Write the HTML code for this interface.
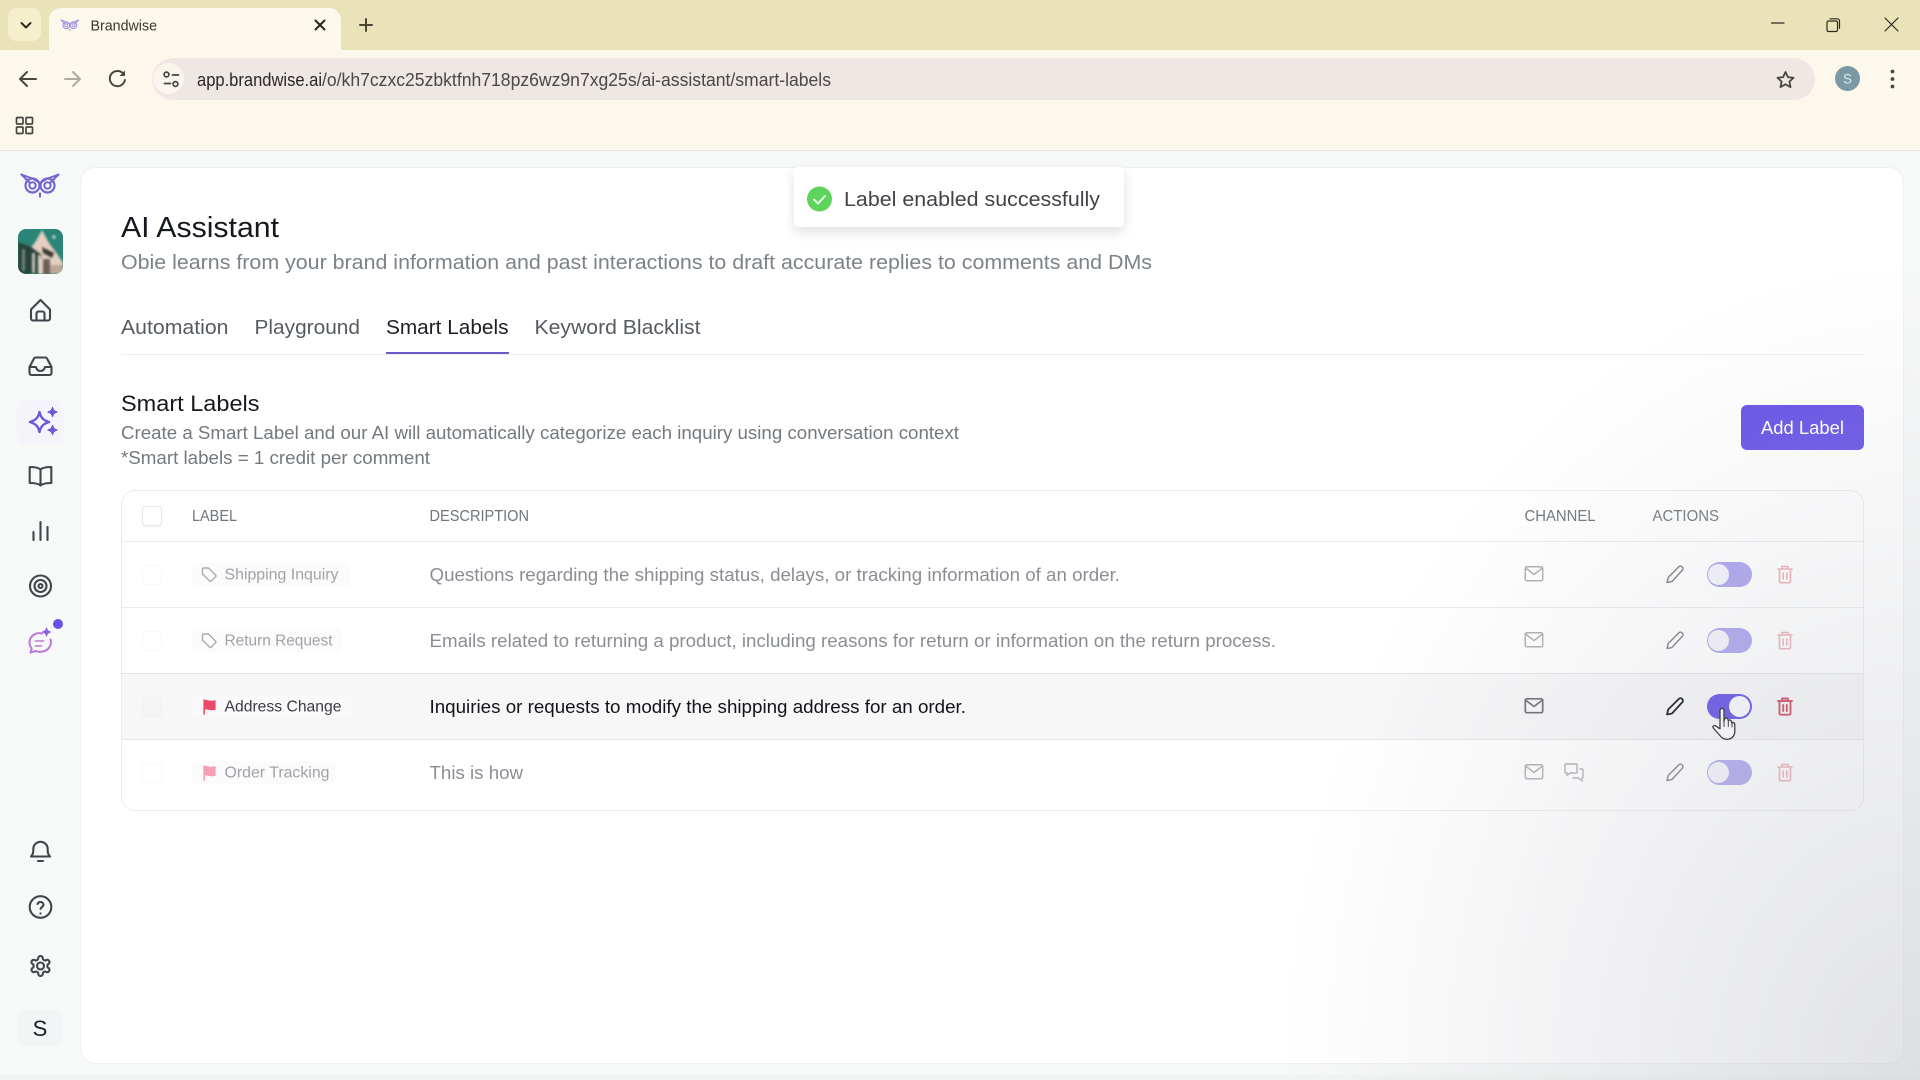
<!DOCTYPE html>
<html><head><meta charset="utf-8"><title>Brandwise</title>
<style>
html,body{margin:0;padding:0;width:1920px;height:1080px;overflow:hidden;background:#f7f8f8}
body{position:relative;font-family:"Liberation Sans",sans-serif}
.a{position:absolute;box-sizing:border-box}
svg{position:absolute;left:0;top:0}
text{font-family:"Liberation Sans",sans-serif}
</style></head><body>
<div class="a" style="left:0;top:0;width:1920px;height:50px;background:#eae3ba"></div>
<div class="a" style="left:0;top:50px;width:1920px;height:101px;background:#fdf8ec;border-bottom:1px solid #e8e5dc"></div>
<div class="a" style="left:8px;top:8px;width:33px;height:33px;border-radius:9px;background:#f5efcc"></div>
<div class="a" style="left:49px;top:8px;width:292px;height:44px;border-radius:12px 12px 0 0;background:#fdf8ec"></div>
<div class="a" style="left:152px;top:58px;width:1663px;height:42px;border-radius:21px;background:#efe7e4"></div>
<div class="a" style="left:153px;top:63px;width:31px;height:31px;border-radius:50%;background:#fbf6ed"></div>
<div class="a" style="left:80px;top:167px;width:1824px;height:897px;border-radius:16px;background:#fff;border:1px solid #eff0f1"></div>
<div class="a" style="left:0;top:1075px;width:1920px;height:5px;background:#f0f5f3"></div>
<div class="a" style="left:17px;top:400px;width:46px;height:44px;border-radius:8px;background:#f4f4fa"></div>
<div class="a" style="left:17px;top:1010px;width:46px;height:36px;border-radius:8px;background:#f3f4f5"></div>
<div class="a" style="left:18px;top:229px;width:45px;height:45px;border-radius:8px;overflow:hidden;background:#2a8577">
<svg width="45" height="45" viewBox="0 0 45 45" style="filter:blur(1px)"><polygon points="24,1 31,14 40,26 45,34 45,45 8,45 12,20 18,12" fill="#e6cfc0"/><polygon points="0,13 13,18 24,26 20,45 0,45" fill="#27433a"/><polygon points="4,20 7,20 7,42 4,42" fill="#6f8478"/><polygon points="14,24 17,24 17,44 14,44" fill="#c7c3b4"/><polygon points="20,26 23,26 23,44 20,44" fill="#d9d0c0"/><polygon points="24,18 36,24 34,29 25,24" fill="#3a3a36"/><polygon points="25,30 32,30 32,45 25,45" fill="#6d6058"/><polygon points="32,36 45,36 45,45 32,45" fill="#bda79a"/><circle cx="36" cy="8" r="1.500" fill="#e8f0ea"/></svg></div>
<div class="a" style="left:121px;top:354px;width:1743px;height:1px;background:#eceded"></div>
<div class="a" style="left:386px;top:352px;width:122.5px;height:2px;background:#6a5ac8"></div>
<div class="a" style="left:794px;top:167px;width:330px;height:60px;background:#fff;border-radius:4px;box-shadow:0 5px 12px rgba(0,0,0,.13)"></div>
<div class="a" style="left:1741px;top:405px;width:123px;height:45px;border-radius:6px;background:#6651e6"></div>
<div class="a" style="left:121px;top:490px;width:1743px;height:321px;border:1px solid #ebecee;border-radius:14px;overflow:hidden">
 <div class="a" style="left:0;top:183px;width:1743px;height:66px;background:rgba(225,226,230,.28)"></div>
 <div class="a" style="left:0;top:50px;width:1743px;height:1px;background:#e9eaec"></div>
 <div class="a" style="left:0;top:116px;width:1743px;height:1px;background:#e9eaec"></div>
 <div class="a" style="left:0;top:182px;width:1743px;height:1px;background:#e4e5e7"></div>
 <div class="a" style="left:0;top:248px;width:1743px;height:1px;background:#e4e5e7"></div>
</div>
<div class="a" style="left:142px;top:506px;width:20px;height:20px;border-radius:4px;background:#fff;border:1px solid #e6e7ea;box-shadow:0 1px 2px rgba(0,0,0,.07)"></div>
<div class="a" style="left:142px;top:565px;width:20px;height:20px;border-radius:4px;border:1px solid #f8f8f9"></div>
<div class="a" style="left:142px;top:631px;width:20px;height:20px;border-radius:4px;border:1px solid #f8f8f9"></div>
<div class="a" style="left:142px;top:697px;width:20px;height:20px;border-radius:4px;border:1px solid #f0f0f2;background:#f5f5f6"></div>
<div class="a" style="left:142px;top:763px;width:20px;height:20px;border-radius:4px;border:1px solid #f8f8f9"></div>
<div class="a" style="left:192px;top:563px;width:159px;height:23px;border-radius:6px;background:#fbfbfc"></div>
<div class="a" style="left:192px;top:629px;width:151px;height:23px;border-radius:6px;background:#fbfbfc"></div>
<div class="a" style="left:192px;top:695px;width:159px;height:23px;border-radius:6px;background:#f9f9fa"></div>
<div class="a" style="left:192px;top:761px;width:144px;height:23px;border-radius:6px;background:#fbfbfc"></div>
<div class="a" style="left:1707px;top:562px;width:45px;height:25px;border-radius:13px;background:#a9a0ee"></div>
<div class="a" style="left:1708px;top:564px;width:21px;height:21px;border-radius:50%;background:#f4f3fb"></div>
<div class="a" style="left:1707px;top:628px;width:45px;height:25px;border-radius:13px;background:#a9a0ee"></div>
<div class="a" style="left:1708px;top:630px;width:21px;height:21px;border-radius:50%;background:#f4f3fb"></div>
<div class="a" style="left:1707px;top:694px;width:45px;height:25px;border-radius:13px;background:#5743e6"></div>
<div class="a" style="left:1729px;top:696px;width:21px;height:21px;border-radius:50%;background:#fafafd"></div>
<div class="a" style="left:1707px;top:760px;width:45px;height:25px;border-radius:13px;background:#a9a0ee"></div>
<div class="a" style="left:1708px;top:762px;width:21px;height:21px;border-radius:50%;background:#f4f3fb"></div>

<svg width="1920" height="1080" viewBox="0 0 1920 1080" fill="none" stroke-linecap="round" stroke-linejoin="round">
<defs>
<g id="mail"><rect x=".8" y=".8" width="17.4" height="13.9" rx="1.5"/><path d="M1 2l8.5 6.5L18 2"/></g>
<g id="pen"><path d="M1 18l1.2-5L13 2.2a2 2 0 0 1 2.8 0l.6.6a2 2 0 0 1 0 2.8L6 17z"/></g>
<g id="trash"><path d="M1 4h14M5 4V1.5h6V4M2.5 4v12.5a1.2 1.2 0 0 0 1.2 1.2h8.6a1.2 1.2 0 0 0 1.2-1.2V4M6.2 8v6M9.8 8v6"/></g>
<g id="tag"><path d="M1 2.2A1.2 1.2 0 0 1 2.2 1H7l7 7a1.3 1.3 0 0 1 0 1.8L9.8 14a1.3 1.3 0 0 1-1.8 0L1 7z"/></g>
<g id="flag"><path d="M1 1.2c3-1 5 1 8 .6 1.3-.2 2.6-.4 3.6-.6v9.4c-1 .3-2.3.5-3.6.6-3 .4-5-1.6-8-.6z" fill="currentColor" stroke="none"/><path d="M1.2 1v14" stroke="currentColor" stroke-width="1.6"/></g>
<g id="owl"><path d="M0 0l12 4.5 6.5 4 6.500-4L37 0 29 8" stroke-width="2"/><path d="M0 0l8 8" stroke-width="2"/><circle cx="11" cy="11" r="7" stroke-width="2.200"/><circle cx="26" cy="11" r="7" stroke-width="2.200"/><circle cx="11" cy="11" r="3.200" stroke-width="2"/><circle cx="26" cy="11" r="3.200" stroke-width="2"/><path d="M18.500 19l0 3" stroke-width="2.200"/></g>
</defs>

<!-- browser chrome -->
<path d="M21.500 23l4.500 4.500 4.500-4.500" stroke="#2e2a1a" stroke-width="2"/>
<use href="#owl" transform="translate(61,20) scale(.48)" stroke="#9d90dc"/>
<text x="90.500" y="30.500" font-size="14.500" fill="#3a3628" stroke="none" textLength="66.500" lengthAdjust="spacingAndGlyphs">Brandwise</text>
<path d="M315.500 20.500l9 9M324.500 20.500l-9 9" stroke="#2a2718" stroke-width="2"/>
<path d="M366 19v12M360 25h12" stroke="#4a452e" stroke-width="2"/>
<path d="M1771.500 23h12.500" stroke="#2e2a1a" stroke-width="1.200"/>
<rect x="1827" y="21" width="10.500" height="10.500" rx="1.500" stroke="#2e2a1a" stroke-width="1.200"/><path d="M1830 18.800h7.500a2 2 0 0 1 2 2v7.500" stroke="#2e2a1a" stroke-width="1.200"/>
<path d="M1885 18l13 13M1898 18l-13 13" stroke="#2e2a1a" stroke-width="1.200"/>
<path d="M36 79H20M27 72l-7 7 7 7" stroke="#4a4640" stroke-width="2"/>
<path d="M80 79H65M73 72l7 7-7 7" stroke="#b0aca2" stroke-width="2"/>
<path d="M123.500 74a7.600 7.600 0 1 0 1.400 6" stroke="#4a4640" stroke-width="2"/><path d="M125 70.500v5.500h-5.500z" fill="#4a4640" stroke="none"/>
<circle cx="166.500" cy="74.500" r="2.400" stroke="#444" stroke-width="1.700"/><path d="M172.500 75h6M164.500 83.500h6" stroke="#444" stroke-width="1.800"/><circle cx="175.500" cy="84" r="2.400" stroke="#444" stroke-width="1.700"/>
<text x="197" y="86" font-size="18" fill="#2a2826" stroke="none" textLength="125" lengthAdjust="spacingAndGlyphs">app.brandwise.ai</text>
<text x="322" y="86" font-size="18" fill="#4a4744" stroke="none" textLength="509" lengthAdjust="spacingAndGlyphs">/o/kh7czxc25zbktfnh718pz6wz9n7xg25s/ai-assistant/smart-labels</text>
<path d="M1785.500 72l2.400 5.100 5.600.7-4.100 3.800 1.100 5.500-5-2.800-5 2.800 1.100-5.500-4.100-3.800 5.600-.7z" stroke="#4a4540" stroke-width="1.800"/>
<circle cx="1847.500" cy="78.500" r="12.500" fill="#7b98a5"/>
<text x="1847.500" y="83.500" font-size="13.500" fill="#dbeaf0" text-anchor="middle">S</text>
<circle cx="1892.500" cy="71.500" r="1.900" fill="#4a4640"/><circle cx="1892.500" cy="79" r="1.900" fill="#4a4640"/><circle cx="1892.500" cy="86.500" r="1.900" fill="#4a4640"/>
<g stroke="#474540" stroke-width="1.700"><rect x="16.500" y="117.500" width="6.500" height="6.500" rx="1"/><rect x="26" y="117.500" width="6.500" height="6.500" rx="1"/><rect x="16.500" y="127" width="6.500" height="6.500" rx="1"/><rect x="26" y="127" width="6.500" height="6.500" rx="1"/></g>

<!-- sidebar -->
<use href="#owl" transform="translate(21.500,174.500)" stroke="#7566cf"/>
<g stroke="#41454b" stroke-width="2.100">
<path d="M31 309.500l9.500-9.500 9.500 9.500v9a2 2 0 0 1-2 2H33a2 2 0 0 1-2-2zM36.500 320.500v-7a2 2 0 0 1 2-2h4a2 2 0 0 1 2 2v7"/>
<path d="M29.500 367l4.500-8.500a2 2 0 0 1 1.800-1h9.400a2 2 0 0 1 1.800 1l4.500 8.500v6a2 2 0 0 1-2 2H31.500a2 2 0 0 1-2-2zM29.500 367H36c.6 2.500 2 4 4.500 4s3.900-1.500 4.500-4h6.500"/>
<path d="M40.500 469.500c-2-1.800-5-2.500-10.800-2.500v16c5.800 0 8.800.7 10.800 2.500 2-1.800 5-2.500 10.800-2.500v-16c-5.800 0-8.800.7-10.800 2.500zM40.500 469.500v16"/>
<path d="M33.500 532v8M40.500 522v18M47.500 527v13"/>
<circle cx="40.500" cy="586" r="10.500"/><circle cx="40.500" cy="586" r="6"/><circle cx="40.500" cy="586" r="2"/>
<path d="M31 856.500c1.500-1.500 2.300-3 2.300-6v-1.500a7.200 7.200 0 0 1 14.400 0v1.500c0 3 .8 4.500 2.300 6zM38 861h5"/>
<circle cx="40.500" cy="907" r="10.800"/>
<path d="M37.500 904a3.100 3.100 0 0 1 6 .8c0 2-3 2.700-3 4.200"/>
<g transform="translate(28.500,954)"><path d="M12.220 2h-.44a2 2 0 0 0-2 2v.18a2 2 0 0 1-1 1.730l-.43.25a2 2 0 0 1-2 0l-.15-.08a2 2 0 0 0-2.730.73l-.22.38a2 2 0 0 0 .73 2.730l.15.1a2 2 0 0 1 1 1.720v.51a2 2 0 0 1-1 1.740l-.15.09a2 2 0 0 0-.73 2.730l.22.38a2 2 0 0 0 2.730.73l.15-.08a2 2 0 0 1 2 0l.43.25a2 2 0 0 1 1 1.730V20a2 2 0 0 0 2 2h.44a2 2 0 0 0 2-2v-.18a2 2 0 0 1 1-1.730l.43-.25a2 2 0 0 1 2 0l.15.08a2 2 0 0 0 2.730-.73l.22-.39a2 2 0 0 0-.73-2.730l-.15-.08a2 2 0 0 1-1-1.740v-.5a2 2 0 0 1 1-1.740l.15-.09a2 2 0 0 0 .73-2.730l-.22-.38a2 2 0 0 0-2.730-.73l-.15.08a2 2 0 0 1-2 0l-.43-.25a2 2 0 0 1-1-1.730V4a2 2 0 0 0-2-2z"/><circle cx="12" cy="12" r="3.500"/></g>
</g>
<circle cx="40.500" cy="913.500" r="1.100" fill="#41454b"/>
<path d="M39.500 412c1.200 5.500 3.500 8 9.500 10-6 2-8.300 4.500-9.500 10-1.200-5.500-3.500-8-9.500-10 6-2 8.300-4.500 9.500-10z" stroke="#6a58d8" stroke-width="2.400"/>
<path d="M52.500 407.500c.8 2.800 1.700 3.700 4.500 4.500-2.800.8-3.700 1.700-4.500 4.500-.8-2.800-1.700-3.700-4.500-4.500 2.800-.8 3.700-1.700 4.500-4.500zM52.500 425.500c.8 2.800 1.700 3.700 4.500 4.500-2.800.8-3.700 1.700-4.500 4.500-.8-2.800-1.700-3.700-4.500-4.500 2.800-.8 3.700-1.700 4.500-4.500z" fill="#6a58d8" stroke="#6a58d8" stroke-width="1.200"/>
<path d="M42 633.500c-6-1.500-12.500 2.500-12.500 9 0 2.500 1 4.500 2.200 6l-1.200 4 5-1.500c5 2 13.500.5 15.300-7 .3-1.500.2-3-.3-4.500" stroke="#bb78d8" stroke-width="2"/>
<path d="M35.500 641h8M35.500 646h6" stroke="#c58ad8" stroke-width="1.800"/>
<path d="M46.500 628c.6 2.400 1.400 3.200 4 4-2.600.8-3.400 1.600-4 4-.6-2.400-1.400-3.200-4-4 2.600-.8 3.400-1.600 4-4z" fill="#8c62d8" stroke="#8c62d8"/>
<circle cx="58" cy="624" r="5" fill="#6651e6"/>
<text x="40" y="1036" font-size="22" fill="#1c1f24" text-anchor="middle">S</text>

<!-- header -->
<text x="121" y="237" font-size="29" fill="#15181e" textLength="158" lengthAdjust="spacingAndGlyphs">AI Assistant</text>
<text x="121" y="269" font-size="20" fill="#7b8289" textLength="1031" lengthAdjust="spacingAndGlyphs">Obie learns from your brand information and past interactions to draft accurate replies to comments and DMs</text>
<text x="121" y="334" font-size="20" fill="#565b62" textLength="107.500" lengthAdjust="spacingAndGlyphs">Automation</text>
<text x="254.500" y="334" font-size="20" fill="#565b62" textLength="105.500" lengthAdjust="spacingAndGlyphs">Playground</text>
<text x="386" y="334" font-size="20" fill="#1b1e24" textLength="122.500" lengthAdjust="spacingAndGlyphs">Smart Labels</text>
<text x="534.500" y="334" font-size="20" fill="#565b62" textLength="166" lengthAdjust="spacingAndGlyphs">Keyword Blacklist</text>
<text x="121" y="411" font-size="22" fill="#16191f" textLength="138.500" lengthAdjust="spacingAndGlyphs">Smart Labels</text>
<text x="121" y="439" font-size="18" fill="#73797f" textLength="838" lengthAdjust="spacingAndGlyphs">Create a Smart Label and our AI will automatically categorize each inquiry using conversation context</text>
<text x="121" y="464" font-size="18" fill="#73797f" textLength="309" lengthAdjust="spacingAndGlyphs">*Smart labels = 1 credit per comment</text>
<text x="1761" y="434" font-size="18" fill="#fff" textLength="83" lengthAdjust="spacingAndGlyphs">Add Label</text>

<!-- toast -->
<circle cx="819.500" cy="199" r="12.500" fill="#5fd45c"/>
<path d="M814 199.500l4 4 7-7.500" stroke="#eafbe8" stroke-width="2"/>
<text x="844" y="206" font-size="20" fill="#414348" textLength="256" lengthAdjust="spacingAndGlyphs">Label enabled successfully</text>

<!-- table header -->
<text x="192" y="521" font-size="15.500" fill="#6f757c" textLength="45" lengthAdjust="spacingAndGlyphs">LABEL</text>
<text x="429.500" y="521" font-size="15.500" fill="#6f757c" textLength="99.500" lengthAdjust="spacingAndGlyphs">DESCRIPTION</text>
<text x="1524.500" y="521" font-size="15.500" fill="#6f757c" textLength="71" lengthAdjust="spacingAndGlyphs">CHANNEL</text>
<text x="1652.500" y="521" font-size="15.500" fill="#6f757c" textLength="66.500" lengthAdjust="spacingAndGlyphs">ACTIONS</text>

<!-- rows -->
<use href="#tag" transform="translate(201.500,567)" stroke="#a8abb0" stroke-width="1.400"/>
<text x="224.500" y="579.500" font-size="15.500" fill="#a0a3a8" textLength="114" lengthAdjust="spacingAndGlyphs">Shipping Inquiry</text>
<use href="#tag" transform="translate(201.500,633)" stroke="#a8abb0" stroke-width="1.400"/>
<text x="224.500" y="645.500" font-size="15.500" fill="#a0a3a8" textLength="108" lengthAdjust="spacingAndGlyphs">Return Request</text>
<use href="#flag" transform="translate(203,699)" style="color:#e94a68"/>
<text x="224.500" y="711.500" font-size="15.500" fill="#3a3d44" textLength="117" lengthAdjust="spacingAndGlyphs">Address Change</text>
<use href="#flag" transform="translate(203,765)" style="color:#f2a0b2"/>
<text x="224.500" y="777.500" font-size="15.500" fill="#a0a3a8" textLength="105" lengthAdjust="spacingAndGlyphs">Order Tracking</text>

<text x="429.500" y="581" font-size="18" fill="#8a8e94" textLength="690.500" lengthAdjust="spacingAndGlyphs">Questions regarding the shipping status, delays, or tracking information of an order.</text>
<text x="429.500" y="647" font-size="18" fill="#8a8e94" textLength="846.500" lengthAdjust="spacingAndGlyphs">Emails related to returning a product, including reasons for return or information on the return process.</text>
<text x="429.500" y="713" font-size="18" fill="#111419" textLength="536.500" lengthAdjust="spacingAndGlyphs">Inquiries or requests to modify the shipping address for an order.</text>
<text x="429.500" y="779" font-size="18" fill="#8a8e94" textLength="93.500" lengthAdjust="spacingAndGlyphs">This is how</text>

<use href="#mail" transform="translate(1524.500,566)" stroke="#acaeb2" stroke-width="1.500"/>
<use href="#mail" transform="translate(1524.500,632)" stroke="#acaeb2" stroke-width="1.500"/>
<use href="#mail" transform="translate(1524.500,698)" stroke="#66696f" stroke-width="1.700"/>
<use href="#mail" transform="translate(1524.500,764)" stroke="#acaeb2" stroke-width="1.500"/>
<path d="M1566 764h10a1 1 0 0 1 1 1v7a1 1 0 0 1-1 1h-6l-3 2.500V773h-1a1 1 0 0 1-1-1v-7a1 1 0 0 1 1-1zM1580 769h2a1 1 0 0 1 1 1v7a1 1 0 0 1-1 1v3l-3.500-3H1573" stroke="#acaeb2" stroke-width="1.400"/>

<use href="#pen" transform="translate(1666,564.500)" stroke="#7b7e83" stroke-width="1.500"/>
<use href="#pen" transform="translate(1666,630.500)" stroke="#7b7e83" stroke-width="1.500"/>
<use href="#pen" transform="translate(1666,696.500)" stroke="#050608" stroke-width="1.800"/>
<use href="#pen" transform="translate(1666,762.500)" stroke="#7b7e83" stroke-width="1.500"/>

<use href="#trash" transform="translate(1777,565)" stroke="#ecaab4" stroke-width="1.600"/>
<use href="#trash" transform="translate(1777,631)" stroke="#ecaab4" stroke-width="1.600"/>
<use href="#trash" transform="translate(1777,697)" stroke="#cc3c54" stroke-width="1.900"/>
<use href="#trash" transform="translate(1777,763)" stroke="#ecaab4" stroke-width="1.600"/>

<!-- hand cursor -->
<path d="M1722 708.500c1.300 0 2 .9 2 2v11l.8-3c1.800-1 3-.3 3.200 1l.3 1c1.500-1 3-.3 3.200 1.200l.3 1.200c1.500-.8 3-.1 3 1.600v7c0 3.500-2 6.500-5.500 7.500-3 .6-6 .3-8-2l-8-9c-1-1.400.5-3.200 2.300-2.200l4.400 3v-18.300c0-1.200.8-2 2-2z" fill="#fff" stroke="#111" stroke-width="1.300"/>
<path d="M1724 721.500v5M1728.300 720.500v6M1732 722v5" stroke="#111" stroke-width="1"/>
</svg>
<div class="a" style="left:0;top:0;width:1920px;height:1080px;pointer-events:none;background:radial-gradient(ellipse 640px 820px at 100% 100%,rgba(200,202,208,.55) 0%,rgba(200,202,208,0) 100%)"></div>
</body></html>
